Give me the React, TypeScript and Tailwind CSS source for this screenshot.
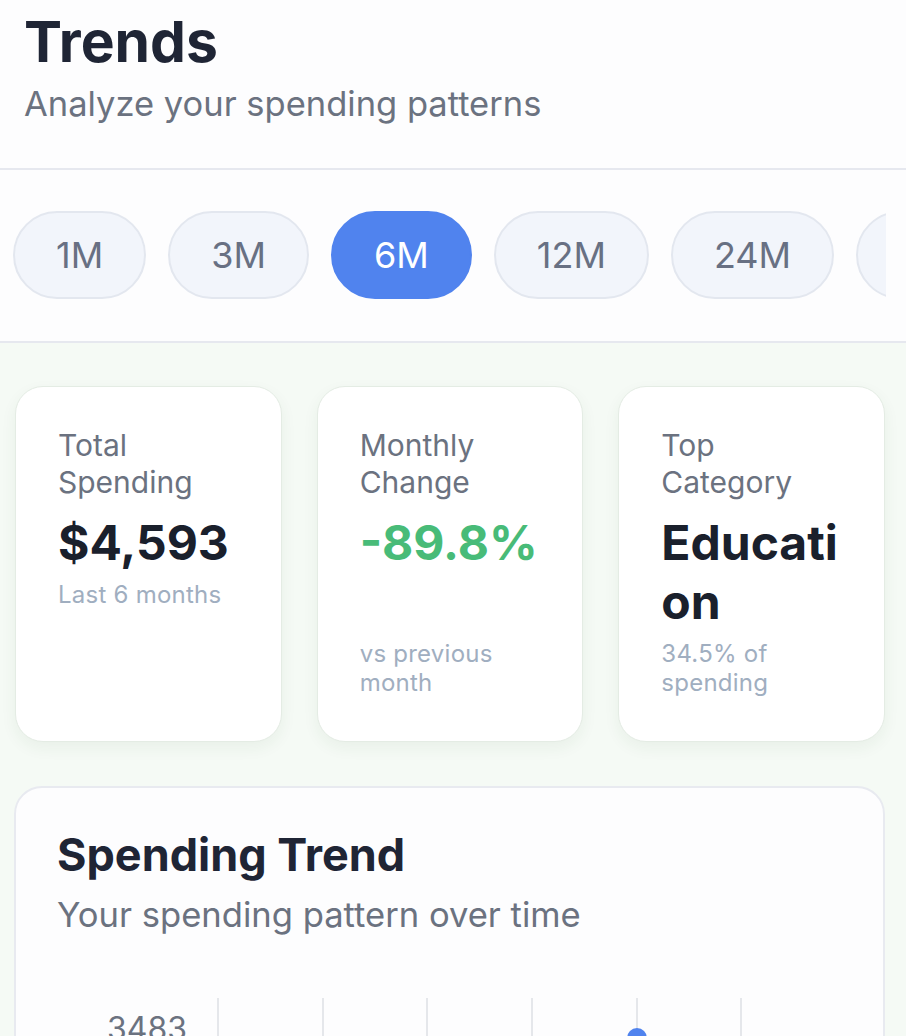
import React, { useState } from "react";

const ranges = ["1M", "3M", "6M", "12M", "24M", "36M"];

type Stat = {
  label: string;
  value: string;
  sub: string;
  valueClass: string;
  pushSub?: boolean;
};

const stats: Stat[] = [
  {
    label: "Total Spending",
    value: "$4,593",
    sub: "Last 6 months",
    valueClass: "text-[#1a202c]",
  },
  {
    label: "Monthly Change",
    value: "-89.8%",
    sub: "vs previous month",
    valueClass: "text-[#48bb78]",
    pushSub: true,
  },
  {
    label: "Top Category",
    value: "Education",
    sub: "34.5% of spending",
    valueClass: "text-[#1a202c]",
  },
];

// month totals for the chart, only the top of it is on screen
const points = [1210, 2140, 1620, 2890, 3483, 356];

const StatCard: React.FC<{ stat: Stat }> = ({ stat }) => (
  <div className="flex flex-col rounded-[28px] border border-[#e4ece4] bg-white px-[42px] pt-[40px] pb-[44px] shadow-[0_6px_16px_rgba(40,80,40,0.06)]">
    <div className="text-[30px] leading-[37px] text-[#6b7280]">{stat.label}</div>
    <div
      className={`mt-[12px] text-[48px] leading-[59px] font-bold [overflow-wrap:anywhere] ${stat.valueClass}`}
    >
      {stat.value}
    </div>
    <div
      className={`text-[24px] leading-[29px] tracking-[0.01em] text-[#a0aec0] ${stat.pushSub ? "mt-auto" : "mt-[8px]"}`}
    >
      {stat.sub}
    </div>
  </div>
);

const TrendChart: React.FC = () => {
  const xs = [161, 266, 370, 475, 580, 684];
  const max = 3483;
  const top = 40;
  const h = 420;
  const ys = points.map((p) => top + (1 - p / max) * h);
  const d = xs.map((x, i) => `${i === 0 ? "M" : "L"}${x} ${ys[i]}`).join(" ");

  return (
    <svg width="784" height="460" className="mt-[63px] block">
      {xs.map((x) => (
        <line key={x} x1={x} y1={0} x2={x} y2={460} stroke="#e5e7eb" strokeWidth={2} />
      ))}
      <text
        x={130}
        y={42}
        textAnchor="end"
        fontSize={32}
        fill="#6b7280"
        fontFamily="Inter, sans-serif"
      >
        3483
      </text>
      <path d={d} fill="none" stroke="#5083ee" strokeWidth={4} />
      {xs.map((x, i) => (
        <circle key={i} cx={x} cy={ys[i]} r={10} fill="#5083ee" />
      ))}
    </svg>
  );
};

const App: React.FC = () => {
  const [range, setRange] = useState("6M");

  return (
    <div className="min-h-screen bg-[#f5faf5] font-['Inter',sans-serif]">
      <div className="border-b-2 border-[#e6e8ef] bg-[#fdfdfe] px-[24px] pt-[10px] pb-[44px]">
        <h1 className="text-[57px] leading-[64px] font-bold text-[#1f2535]">
          Trends
        </h1>
        <p className="mt-[10px] text-[34.5px] leading-[40px] text-[#6b7280]">
          Analyze your spending patterns
        </p>
      </div>

      <div className="border-b-2 border-[#e6e8ef] bg-[#fdfdfe] pt-[41px] pb-[42px]">
        <div className="mr-[20px] ml-[13px] flex gap-[22px] overflow-hidden">
          {ranges.map((r) => (
            <button
              key={r}
              onClick={() => setRange(r)}
              className={`flex h-[88px] shrink-0 items-center rounded-full border-2 px-[41px] text-[36px] ${
                range === r
                  ? "border-[#5083ee] bg-[#5083ee] text-white"
                  : "border-[#e3e7ef] bg-[#f2f5fb] text-[#687083]"
              }`}
            >
              {r}
            </button>
          ))}
        </div>
      </div>

      <div className="pt-[43px] pr-[21px] pl-[15px]">
        <div className="grid grid-cols-3 gap-[35px]">
          {stats.map((s) => (
            <StatCard key={s.label} stat={s} />
          ))}
        </div>

        <div className="mt-[44px] -ml-px overflow-hidden rounded-[28px] border-2 border-[#e8eaf0] bg-[#fdfdfe] px-[41px] pt-[40px]">
          <h2 className="text-[45px] leading-[54px] font-bold text-[#1f2535]">
            Spending Trend
          </h2>
          <p className="mt-[11px] text-[34.6px] leading-[42px] text-[#6b7280]">
            Your spending pattern over time
          </p>
          <TrendChart />
        </div>
      </div>
    </div>
  );
};

export default App;
